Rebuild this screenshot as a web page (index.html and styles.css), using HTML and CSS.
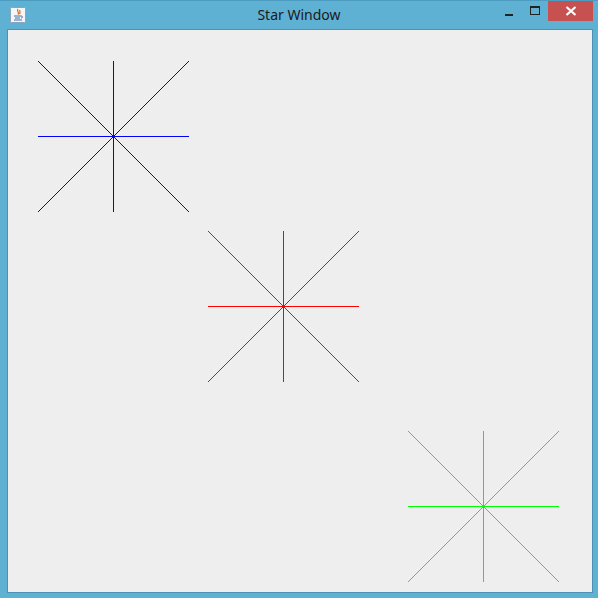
FILE: index.html
```html
<!DOCTYPE html>
<html>
<head>
<meta charset="utf-8">
<link rel="stylesheet" href="styles.css">
</head>
<body>
<div class="window">
  <div class="titlebar">
    <div class="app-icon">
      <svg width="16" height="16" viewBox="0 0 16 16">
        <rect x="0.5" y="0.5" width="15" height="15" rx="1" fill="#f4f7fa" stroke="#8aa4bd"/>
        <path d="M8 2 C6 4 10 5 8 7.5 M10 3 C9 4.5 11 5 9.5 7" stroke="#e2711d" stroke-width="1.3" fill="none"/>
        <path d="M4 9 H11 M5 11 H10 M4 13 H12" stroke="#3c6fa8" stroke-width="1" fill="none"/>
        <path d="M11 9 C13 9 13 11 11 11" stroke="#3c6fa8" stroke-width="1" fill="none"/>
      </svg>
    </div>
    <div class="title">Star Window</div>
    <div class="controls">
      <div class="ctl min"><span class="min-bar"></span></div>
      <div class="ctl max"><span class="max-box"></span></div>
      <div class="ctl close">
        <svg width="12" height="10" viewBox="0 0 12 10"><path d="M1.5 1 L10.5 9 M10.5 1 L1.5 9" stroke="#fff" stroke-width="2.2"/></svg>
      </div>
    </div>
  </div>
  <div class="content">
    <svg class="canvas" width="584" height="562" viewBox="0 0 584 562" shape-rendering="crispEdges">
      <g stroke="#0000ff" stroke-width="1">
        <line x1="30" y1="106.5" x2="181" y2="106.5"/>
        <line x1="105.5" y1="31" x2="105.5" y2="182"/>
        <line x1="30" y1="31" x2="181" y2="182"/>
        <line x1="181" y1="31" x2="30" y2="182"/>
        <rect x="104" y="105" width="3" height="3" fill="#0000ff" stroke="none"/>
      </g>
      <g stroke="#ff0000" stroke-width="1">
        <line x1="200" y1="276.5" x2="351" y2="276.5"/>
        <line x1="275.5" y1="201" x2="275.5" y2="352"/>
        <line x1="200" y1="201" x2="351" y2="352"/>
        <line x1="351" y1="201" x2="200" y2="352"/>
        <rect x="274" y="275" width="3" height="3" fill="#ff0000" stroke="none"/>
      </g>
      <g stroke="#00ff00" stroke-width="1">
        <line x1="400" y1="476.5" x2="551" y2="476.5"/>
        <line x1="475.5" y1="401" x2="475.5" y2="552"/>
        <line x1="400" y1="401" x2="551" y2="552"/>
        <line x1="551" y1="401" x2="400" y2="552"/>
        <rect x="474" y="475" width="3" height="3" fill="#00ff00" stroke="none"/>
      </g>
    </svg>
  </div>
</div>
</body>
</html>
```
FILE: styles.css
```css
html, body {
  margin: 0;
  padding: 0;
  background: #5fb1d3;
}
.window {
  width: 598px;
  height: 598px;
  box-sizing: border-box;
  background: #5fb1d3;
  border-top: 1px solid #4b9cc0;
  padding: 0 5px 5px 7px;
  display: flex;
  flex-direction: column;
}
.titlebar {
  height: 28px;
  display: flex;
  align-items: flex-start;
  position: relative;
}
.app-icon {
  margin-left: 3px;
  margin-top: 6px;
  width: 16px;
  height: 16px;
}
.app-icon svg { display: block; }
.title {
  position: absolute;
  left: -7px;
  right: -5px;
  top: 5px;
  text-align: center;
  font-family: "Noto Sans", "Open Sans", sans-serif;
  font-size: 14px;
  color: #1a1a1a;
  line-height: 18px;
}
.controls {
  margin-left: auto;
  display: flex;
  height: 20px;
  margin-right: 0;
}
.ctl {
  height: 20px;
  display: flex;
  align-items: center;
  justify-content: center;
}
.min { width: 26px; }
.min-bar {
  width: 8px;
  height: 2px;
  background: #222;
  margin-top: 7px;
}
.max { width: 26px; }
.max-box {
  width: 8px;
  height: 6px;
  border: 1px solid #222;
  border-top-width: 2px;
  margin-top: -2px;
}
.close {
  width: 45px;
  background: #c75050;
}
.close svg { display: block; }
.content {
  flex: 1;
  border: 1px solid #4a93b5;
  background: #eeeeee;
}
.canvas { display: block; }
```
